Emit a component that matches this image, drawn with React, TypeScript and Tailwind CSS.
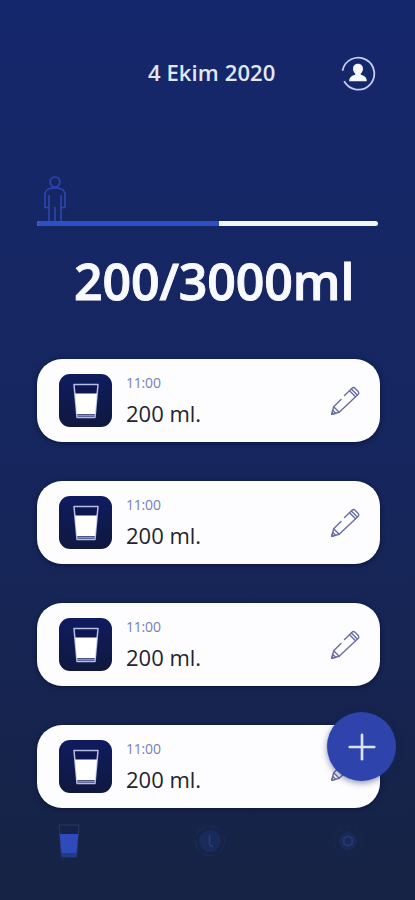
import { Plus } from 'lucide-react';

const entries = [
  { time: "11:00", amount: "200 ml." },
  { time: "11:00", amount: "200 ml." },
  { time: "11:00", amount: "200 ml." },
  { time: "11:00", amount: "200 ml." }
];

function ProfileIcon() {
  return (
    <svg className="w-[36px] h-[36px]" viewBox="0 0 36 36" fill="none">
      <path d="M2.7 14A16 16 0 1 1 4.5 25.8" stroke="#c3cbed" strokeWidth="1.8" strokeLinecap="round" />
      <path d="M18 7.8c3.200 0 5 2.200 5 5 0 2.200-1 3.800-2.200 4.800v1.200c3 .8 6 2.200 6 6.400H9.200c0-4.200 3-5.600 6-6.400v-1.200c-1.200-1-2.200-2.600-2.200-4.800 0-2.800 1.800-5 5-5z" fill="#f6f8ff" />
    </svg>
  );
}

function PersonIcon() {
  return (
    <svg className="w-[24px] h-[48px]" viewBox="0 0 24 48" fill="none" stroke="#2c45ad" strokeWidth="1.7" strokeLinejoin="round">
      <circle cx="12" cy="6" r="5" />
      <path d="M5.500 31.500H2V19c0-3.800 1.800-5.500 5-6.500 1.500-.6 2.800-.6 5-.6s3.500 0 5 .6c3.200 1 5 2.700 5 6.500v12.500h-3.500" />
      <path d="M6 19v27M18 19v27M12 31v15" />
    </svg>
  );
}

function GlassIcon() {
  return (
    <svg className="w-[28px] h-[36px]" viewBox="0 0 28 36" fill="none">
      <path d="M2 1.500h24L23 34.500H5z" fill="#0d1652" stroke="#b5bde5" strokeWidth="1.500" strokeLinejoin="round" />
      <path d="M3 10.500h22L23.200 31H4.800z" fill="#fff" />
      <path d="M5 32.500h18" stroke="#8790b8" strokeWidth="2" />
    </svg>
  );
}

function PencilIcon() {
  return (
    <svg className="w-[30px] h-[30px]" viewBox="0 0 30 30" fill="none" stroke="#6a6ea6" strokeWidth="1.400" strokeLinejoin="round" strokeLinecap="round">
      <path d="M11 13.500l-7.300 7.300-2 7.500 7.500-2L28 8.600c1-1 1-2.400 0-3.400l-2.800-2.800c-1-1-2.400-1-3.400 0L14.500 9.600" />
      <path d="M3.700 20.800l5.500 5.500M19.500 4.700l5.800 5.800M21.300 3l5.800 5.800M1.700 28.300l1.200-3.900 2.700 2.900z" />
    </svg>
  );
}

function NavGlassIcon() {
  return (
    <svg className="w-[22px] h-[34px]" viewBox="0 0 22 34" fill="none">
      <path d="M1 1h20l-2.500 32h-15z" fill="#162348" stroke="#26376e" strokeWidth="1" />
      <path d="M1.700 10h18.600l-1.700 19H3.400z" fill="#2f4abb" />
      <path d="M3.500 29h15l-.3 4H3.800z" fill="#223988" />
    </svg>
  );
}

function NavClockIcon() {
  return (
    <svg className="w-[32px] h-[32px]" viewBox="0 0 32 32" fill="none">
      <circle cx="16" cy="16" r="14.500" stroke="#182a55" strokeWidth="1.500" strokeDasharray="12 5" />
      <circle cx="16" cy="16" r="11" fill="#182b5a" />
      <path d="M15.500 10v8.500q0 2.500 3.500 3" stroke="#2a3d6e" strokeWidth="1.500" />
    </svg>
  );
}

function NavSettingsIcon() {
  return (
    <svg className="w-[32px] h-[32px]" viewBox="0 0 32 32" fill="none">
      <circle cx="16" cy="16" r="14" stroke="#182850" strokeWidth="1.500" strokeDasharray="5 4" />
      <circle cx="16" cy="16" r="9" fill="#192a59" />
      <circle cx="16" cy="16" r="4.500" stroke="#24386f" strokeWidth="2" />
    </svg>
  );
}

export default function App() {
  return (
    <div className="relative w-[415px] h-[900px] overflow-hidden bg-linear-to-b from-[#15276c] via-[#16265e] to-[#162344] font-['Open_Sans',sans-serif] text-white">
      <header className="flex h-[148px] items-center justify-end pr-[39px]">
        <h1 className="mr-[65px] w-[127px] -mt-[4px] whitespace-nowrap text-[22px] font-semibold leading-[28px] tracking-[0.1px] text-[#e2e7f8]">4 Ekim 2020</h1>
        <ProfileIcon />
      </header>

      <section className="h-[211px] px-[37px] pt-[28px]">
        <div className="pl-[6px]">
          <PersonIcon />
        </div>
        <div className="-mt-[3px] flex h-[5px] overflow-hidden rounded-full bg-[#f3f5fd]">
          <div className="w-[182px] bg-[#2f4fc4]" />
        </div>
        <p className="mt-[25px] whitespace-nowrap pl-[37px] text-[50px] font-semibold leading-[60px] tracking-[-0.1px] text-[#f8faff] [-webkit-text-stroke:1px_#f8faff]">200/3000ml</p>
      </section>

      <main className="flex flex-col gap-[39px] pl-[37px] pr-[35px]">
        {entries.map((entry, index) => (
          <div key={index} className="flex h-[83px] items-center rounded-[25px] bg-[#fdfdff] pl-[22px] pr-[20px] shadow-[0_1px_5px_#0b143b]">
            <div className="flex h-[53px] w-[53px] items-center justify-center rounded-[11px] bg-linear-to-b from-[#0f1b60] to-[#10183e]">
              <GlassIcon />
            </div>
            <div className="ml-[14px] flex-1">
              <p className="text-[14px] leading-[20px] tracking-[-0.2px] text-[#777fb9]">{entry.time}</p>
              <p className="mt-[5px] text-[22px] leading-[30px] text-[#232430]">{entry.amount}</p>
            </div>
            <PencilIcon />
          </div>
        ))}
      </main>

      <nav className="flex items-center justify-between pl-[58px] pr-[51px] pt-[16px]">
        <NavGlassIcon />
        <div className="pl-[7px]">
          <NavClockIcon />
        </div>
        <NavSettingsIcon />
      </nav>

      <button className="absolute left-[327px] top-[712px] flex h-[69px] w-[69px] items-center justify-center rounded-full bg-[#2e44ac] shadow-[0_2px_6px_#18255a80]">
        <Plus className="h-[42px] w-[42px] text-[#dce5ff]" strokeWidth={1.5} />
      </button>
    </div>
  );
}
